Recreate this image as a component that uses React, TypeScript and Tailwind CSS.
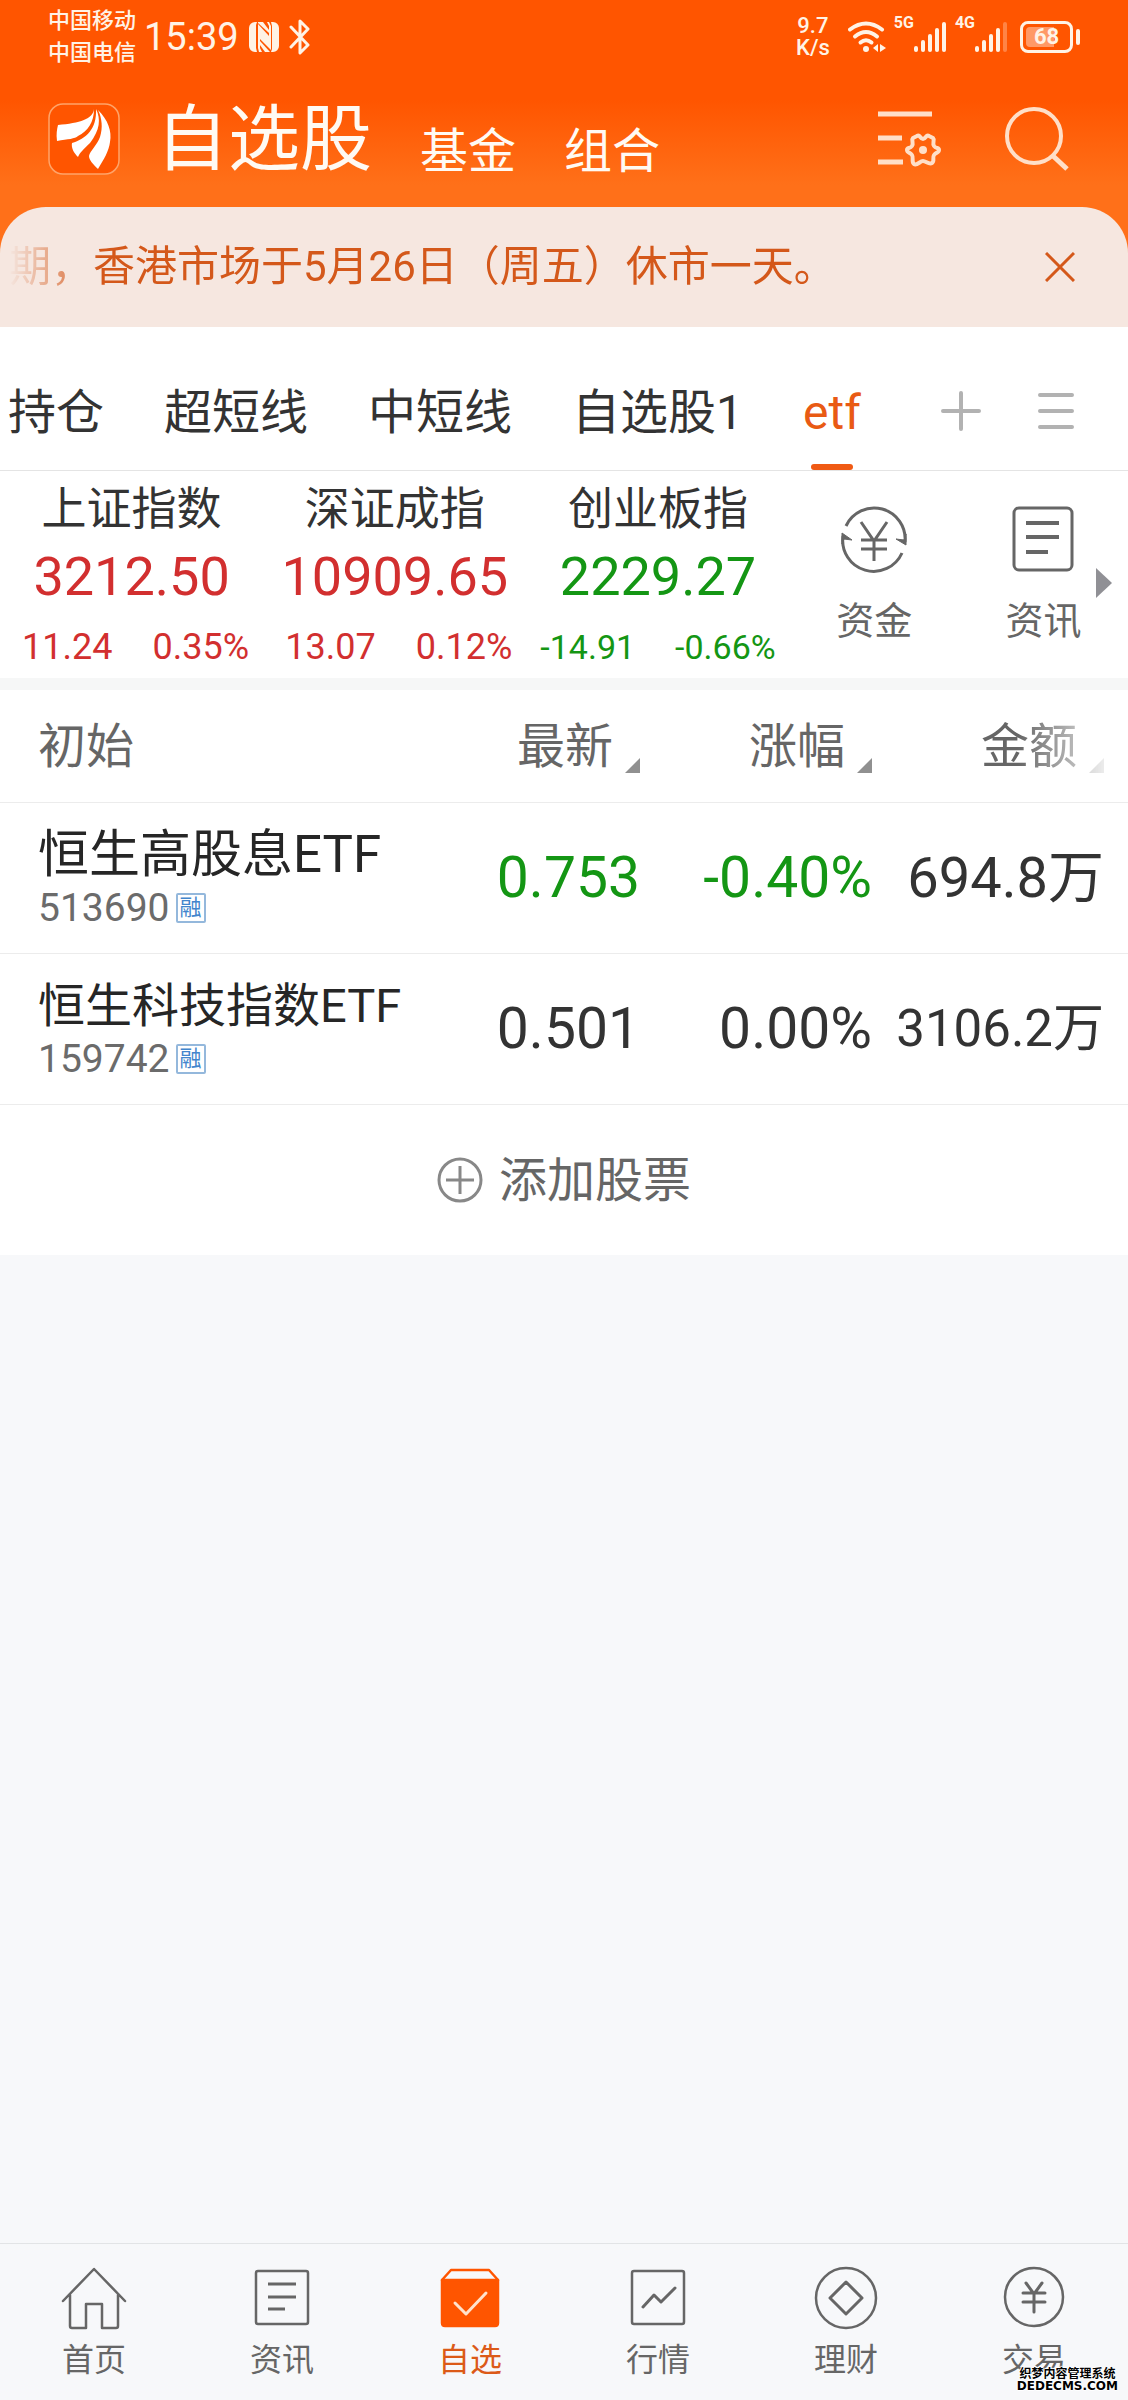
import type { ReactNode } from "react";

const TABS = ["持仓", "超短线", "中短线", "自选股1", "etf"];

const INDICES = [
    { name: "上证指数", value: "3212.50", change: "11.24", percent: "0.35%", up: true },
    { name: "深证成指", value: "10909.65", change: "13.07", percent: "0.12%", up: true },
    { name: "创业板指", value: "2229.27", change: "-14.91", percent: "-0.66%", up: false },
];

const STOCKS = [
    {
        name: "恒生高股息ETF",
        nameSize: "text-[51px]",
        code: "513690",
        price: "0.753",
        percent: "-0.40%",
        amount: "694.8万",
        amountSize: "text-[56px]",
        color: "text-[#149614]",
    },
    {
        name: "恒生科技指数ETF",
        nameSize: "text-[47px]",
        code: "159742",
        price: "0.501",
        percent: "0.00%",
        amount: "3106.2万",
        amountSize: "text-[51px]",
        color: "text-[#333333]",
    },
];

function NfcIcon() {
    return (
        <svg width="30" height="32" viewBox="0 0 30 32" fill="currentColor">
            <path d="M6 1h2L7 4v23l1 4H6a6 6 0 0 1-6-6V7a6 6 0 0 1 6-6Z" />
            <path d="M24 1h-2l1 4v23l-1 3h2a6 6 0 0 0 6-6V7a6 6 0 0 0-6-6Z" />
            <path d="M9 3l11 12V5l-2-4h2l2 4v24L11 18v9l2 4h-3l-1-4Z" />
            <path d="M9 1h5l6 8v3L9 2Z" />
            <path d="M11 20l10 11h-5l-5-7Z" />
        </svg>
    );
}

function BluetoothIcon() {
    return (
        <svg width="22" height="36" viewBox="0 0 22 36" fill="none" stroke="currentColor" strokeWidth="3" strokeLinecap="round" strokeLinejoin="round">
            <path d="M2 8l17 18-8 8V2l8 8L2 28" />
        </svg>
    );
}

function WifiIcon() {
    return (
        <svg width="38" height="32" viewBox="0 0 38 32" fill="none" stroke="currentColor" strokeWidth="4" strokeLinecap="round">
            <path d="M2 8.500Q18 -3.500 34 8.500" />
            <path d="M7 15.500Q18 6.500 29 15.500" />
            <path d="M12.500 21.500Q18 17 23.500 21.500" />
            <circle cx="18" cy="28" r="3" fill="currentColor" stroke="none" />
            <path d="M30 23v8l-5-4Z" fill="currentColor" stroke="none" />
            <path d="M32 23v8l6-4Z" fill="currentColor" stroke="none" />
        </svg>
    );
}

function SignalIcon({ bars }: { bars: number }) {
    return (
        <svg width="33" height="32" viewBox="0 0 33 32" fill="currentColor">
            {[25, 19, 13, 7, 1].map((y, i) => (
                <rect key={y} x={i * 7} y={y} width="4" height={31 - y} rx="2" opacity={i < bars ? 1 : 0.3} />
            ))}
        </svg>
    );
}

function LogoIcon() {
    return (
        <svg width="72" height="72" viewBox="0 0 72 72" fill="none">
            <rect x="1" y="1" width="70" height="70" rx="14" fill="#ff5500" stroke="#ffa469" strokeWidth="1.500" />
            <path d="M46 6C45 16 32 20 10 22C9 26 8 31 9 38C20 36 27 36 30 33C40 28 46 19 46 6Z" fill="#fff" />
            <path d="M48 6C53 16 52 27 42 40C36 46 32 49 30 54C26 50 23 45 24 40C38 36 49 26 48 6Z" fill="#fff" />
            <path d="M50 7C60 17 64 28 62 39C61 48 56 56 50 66C45 61 41 57 41 53C42 48 49 42 52 34C55 25 54 15 50 7Z" fill="#fff" />
        </svg>
    );
}

function ListSettingsIcon() {
    return (
        <svg width="63" height="60" viewBox="0 0 63 60" fill="none" stroke="currentColor" strokeWidth="5">
            <path d="M0 5h54M0 29h24M0 53h25" />
            <path
                d="M39 27C42 25 42 30 45 30S48 25 51 27L55 29C57 31 54 34 56 37S61 38 61 41S58 43 56 46S57 52 54 54S48 52 45 52S39 57 36 55S36 49 34 46S29 44 29 41S32 40 34 37S33 31 35 29Z"
                strokeWidth="4"
                strokeLinejoin="round"
            />
            <circle cx="45" cy="41" r="4" fill="currentColor" stroke="none" />
        </svg>
    );
}

function SearchIcon() {
    return (
        <svg width="64" height="64" viewBox="0 0 64 64" fill="none" stroke="currentColor" strokeWidth="4">
            <circle cx="29" cy="29" r="27" />
            <path d="M47 48l15 14" strokeWidth="5" />
        </svg>
    );
}

function FundsIcon() {
    return (
        <svg width="68" height="68" viewBox="0 0 68 68" fill="none" stroke="currentColor" strokeWidth="3">
            <path d="M6 21A31 31 0 0 1 65 37" />
            <path d="M62 48A31 31 0 0 1 3 31" />
            <path d="M66 29v11l-10-6 8 1ZM2 39V28l10 7-8-1Z" fill="currentColor" strokeWidth="1" />
            <path d="M21 17l13 19 13-19M21 35h26M21 44h26M34 35v21" />
        </svg>
    );
}

function NewsIcon() {
    return (
        <svg width="64" height="66" viewBox="0 0 64 66" fill="none" stroke="currentColor" strokeWidth="3">
            <rect x="3" y="2" width="58" height="62" rx="5" />
            <path d="M15 17h33M15 31h33M15 46h22" strokeWidth="4" />
        </svg>
    );
}

function NavIcon({ children }: { children: ReactNode }) {
    return (
        <svg width="66" height="66" viewBox="0 0 66 66" fill="none" stroke="currentColor" strokeWidth="2.500" strokeLinecap="round" strokeLinejoin="round">
            {children}
        </svg>
    );
}

const NAV = [
    {
        label: "首页",
        icon: <path d="M2 37L33 5l31 32M9 31v31q0 2 2 2h14V40h16v24h14q2 0 2-2V31" />,
    },
    {
        label: "资讯",
        icon: (
            <>
                <rect x="7" y="7" width="52" height="53" rx="2" />
                <path d="M19 20h28M19 33h28M19 45h17" strokeWidth="3" strokeLinecap="butt" />
            </>
        ),
    },
    {
        label: "自选",
        active: true,
        icon: (
            <>
                <path d="M5 16L14 6h38l9 10" />
                <path d="M5 16h56v43q0 3-3 3H8q-3 0-3-3Z" fill="currentColor" />
                <path d="M18 39l11 11 20-21" stroke="#ffe2cc" strokeWidth="3" />
            </>
        ),
    },
    {
        label: "行情",
        icon: (
            <>
                <rect x="7" y="7" width="52" height="53" rx="2" />
                <path d="M18 43l11-12 7 7 14-14" strokeWidth="3" />
            </>
        ),
    },
    {
        label: "理财",
        icon: (
            <>
                <circle cx="33" cy="34" r="30" />
                <path d="M33 18l16 16-16 16-16-16Z" strokeWidth="3" />
            </>
        ),
    },
    {
        label: "交易",
        icon: (
            <>
                <circle cx="33" cy="33" r="29" />
                <path d="M25 19l8 11 8-11M22 29h22M22 38h22M33 29v19" strokeWidth="3" />
            </>
        ),
    },
];

function StatusBar() {
    return (
        <div className="flex h-[74px] items-center justify-between pl-12 pr-12 text-[#fff3e6]">
            <div className="flex items-center">
                <div className="text-[22px] leading-8 font-medium">
                    <p>中国移动</p>
                    <p>中国电信</p>
                </div>
                <span className="ml-2 mr-[10px] text-[38px] leading-10">15:39</span>
                <NfcIcon />
                <div className="ml-[10px]">
                    <BluetoothIcon />
                </div>
            </div>
            <div className="flex items-center">
                <div className="mr-[18px] text-center text-[22px] leading-[22px] font-medium">
                    <p>9.7</p>
                    <p>K/s</p>
                </div>
                <WifiIcon />
                <span className="ml-2 self-start text-base leading-4 font-bold">5G</span>
                <SignalIcon bars={5} />
                <span className="ml-2 self-start text-base leading-4 font-bold">4G</span>
                <SignalIcon bars={4} />
                <div className="ml-3 flex items-center gap-[3px]">
                    <div className="flex h-8 w-[53px] rounded-lg border-3 border-current p-[3px]">
                        <span className="flex-1 rounded-sm bg-[linear-gradient(to_right,#ff9966_68%,transparent_68%)] text-center text-[22px] leading-5 font-bold">
                            68
                        </span>
                    </div>
                    <div className="h-4 w-1 rounded-full bg-current" />
                </div>
            </div>
        </div>
    );
}

function SortHeader({ label, className }: { label: string; className?: string }) {
    return (
        <button className={`inline-flex items-end gap-3 align-middle leading-[52px] ${className ?? ""}`}>
            {label}
            <svg width="15" height="15" viewBox="0 0 15 15" fill="#909090">
                <path d="M15 0v15H0Z" />
            </svg>
        </button>
    );
}

export default function App() {
    return (
        <div className="relative flex min-h-screen flex-col bg-[#f7f8fa] font-[Roboto,'Noto_Sans_CJK_SC',sans-serif] text-[#333333]">
            <div className="bg-[linear-gradient(#ff5500_100px,#ff7019_185px)]">
                <StatusBar />
                <header className="flex h-[133px] items-center justify-between pb-1 pl-12 pr-[59px] text-[#fffaf3]">
                    <div className="flex items-center">
                        <LogoIcon />
                        <nav className="ml-9 flex items-end gap-12 pt-[2px]">
                            <a href="#stocks" className="text-[72px] leading-[80px]">自选股</a>
                            <a href="#funds" className="text-5xl leading-[56px]">基金</a>
                            <a href="#portfolio" className="text-5xl leading-[56px]">组合</a>
                        </nav>
                    </div>
                    <div className="flex items-center gap-16 text-[#ffdfc8]">
                        <button aria-label="列表设置"><ListSettingsIcon /></button>
                        <button aria-label="搜索"><SearchIcon /></button>
                    </div>
                </header>
                <div className="flex h-[120px] items-center justify-between rounded-t-[46px] bg-[#f6e7e0] pl-[9px] pr-[53px] text-[#d4581a]">
                    <p className="text-[42px] leading-[56px] whitespace-nowrap [mask-image:linear-gradient(to_right,transparent,black_90px)]">
                        期，香港市场于5月26日（周五）休市一天。
                    </p>
                    <button aria-label="关闭">
                        <svg width="30" height="30" viewBox="0 0 30 30" fill="none" stroke="currentColor" strokeWidth="3">
                            <path d="M1 1l28 28M29 1L1 29" />
                        </svg>
                    </button>
                </div>
            </div>

            <div className="flex h-36 items-stretch justify-between border-b border-[#e4e4e4] bg-white pl-2 pr-[53px]">
                <div className="flex gap-[60px] text-5xl">
                    {TABS.map((tab) =>
                        tab === "etf" ? (
                            <button key={tab} className="relative pt-7 text-[#e95a14]">
                                {tab}
                                <span className="absolute bottom-0 left-1/2 h-[6px] w-[42px] -translate-x-1/2 rounded-full bg-[#f05a14]" />
                            </button>
                        ) : (
                            <button key={tab} className="pt-7 whitespace-nowrap">{tab}</button>
                        )
                    )}
                </div>
                <div className="flex items-center gap-14 pt-6 text-[#b2b2b2]">
                    <button aria-label="添加分组">
                        <svg width="40" height="40" viewBox="0 0 40 40" stroke="currentColor" strokeWidth="4" strokeLinecap="round">
                            <path d="M20 2v36M2 20h36" />
                        </svg>
                    </button>
                    <button aria-label="管理分组">
                        <svg width="38" height="40" viewBox="0 0 38 40" stroke="currentColor" strokeWidth="4" strokeLinecap="round">
                            <path d="M3 4h32M3 20h32M3 36h32" />
                        </svg>
                    </button>
                </div>
            </div>

            <section className="relative grid grid-cols-[14fr_14fr_14fr_9fr_9fr] border-b-12 border-[#f6f7f7] bg-white pb-[7px]">
                {INDICES.map((index) => (
                    <div key={index.name} className={`text-center whitespace-nowrap ${index.up ? "text-[#d22f2f]" : "text-[#149614]"}`}>
                        <p className="pt-3 text-[45px] leading-[54px] text-[#333333]">{index.name}</p>
                        <p className="pt-1 text-[54px] leading-[72px]">{index.value}</p>
                        <p className={`flex justify-center gap-10 pt-[10px] leading-[48px] ${index.up ? "pl-2 text-4xl" : "text-[34px]"}`}>
                            <span>{index.change}</span>
                            <span>{index.percent}</span>
                        </p>
                    </div>
                ))}
                <a href="#money" className="flex flex-col items-center pt-[34px] text-[38px] leading-[56px] text-[#666666]">
                    <FundsIcon />
                    <span className="pt-5">资金</span>
                </a>
                <a href="#news" className="flex flex-col items-center pt-[35px] text-[38px] leading-[56px] text-[#666666]">
                    <NewsIcon />
                    <span className="pt-[21px]">资讯</span>
                </a>
                <svg className="absolute top-[97px] right-4" width="16" height="30" viewBox="0 0 16 30" fill="#909095">
                    <path d="M0 0l16 15L0 30Z" />
                </svg>
            </section>

            <table className="w-full table-fixed bg-white whitespace-nowrap">
                <thead>
                    <tr className="h-28 border-b border-[#ececec] text-right text-5xl text-[#666666]">
                        <th className="pt-[2px] pl-[38px] text-left font-normal">初始</th>
                        <th className="w-[232px] pt-[2px] font-normal"><SortHeader label="最新" /></th>
                        <th className="w-[232px] pt-[2px] font-normal"><SortHeader label="涨幅" /></th>
                        <th className="w-[256px] pt-[2px] pr-6 font-normal">
                            <SortHeader label="金额" className="[mask-image:linear-gradient(to_right,black_30%,transparent_115%)]" />
                        </th>
                    </tr>
                </thead>
                <tbody>
                    {STOCKS.map((stock) => (
                        <tr key={stock.code} className="h-[151px] border-b border-[#ececec] text-right">
                            <td className="pt-1 pl-[38px] text-left">
                                <p className={`leading-[56px] text-[#262626] ${stock.nameSize}`}>{stock.name}</p>
                                <p className="flex items-center gap-[6px] text-[39px] leading-[50px] text-[#6b6b6b]">
                                    {stock.code}
                                    <span className="flex h-[30px] w-[30px] items-center justify-center rounded-xs border-2 border-[#94b8dc] text-[22px] text-[#4285cc]">
                                        融
                                    </span>
                                </p>
                            </td>
                            <td className={`text-[57px] leading-[72px] ${stock.color}`}>{stock.price}</td>
                            <td className={`text-[57px] leading-[72px] ${stock.color}`}>{stock.percent}</td>
                            <td className={`pr-6 leading-[72px] ${stock.amountSize}`}>{stock.amount}</td>
                        </tr>
                    ))}
                </tbody>
            </table>

            <button className="flex h-[150px] items-center justify-center gap-4 bg-white text-5xl text-[#666666]">
                <svg width="46" height="46" viewBox="0 0 46 46" fill="none" stroke="#888888" strokeWidth="3">
                    <circle cx="23" cy="23" r="21" />
                    <path d="M23 9v28M9 23h28" />
                </svg>
                <span className="pt-[2px]">添加股票</span>
            </button>

            <nav className="mt-auto grid h-[157px] grid-cols-6 border-t border-[#e2e4e6]">
                {NAV.map((item) => (
                    <a
                        key={item.label}
                        href={`#${item.label}`}
                        className={`flex flex-col items-center pt-5 ${item.active ? "text-[#ff5500]" : "text-[#666666]"}`}
                    >
                        <NavIcon>{item.icon}</NavIcon>
                        <span className={`pt-2 text-[32px] leading-[44px] ${item.active ? "text-[#dc5a18]" : ""}`}>{item.label}</span>
                    </a>
                ))}
            </nav>

            <div className="absolute right-[10px] bottom-[8px] text-center text-xs leading-3 font-bold text-black [text-shadow:1px_0_1px_#fff,-1px_0_1px_#fff,0_1px_1px_#fff,0_-1px_1px_#fff]">
                <p>织梦内容管理系统</p>
                <p className="font-['DejaVu_Sans',sans-serif]">DEDECMS.COM</p>
            </div>
        </div>
    );
}
